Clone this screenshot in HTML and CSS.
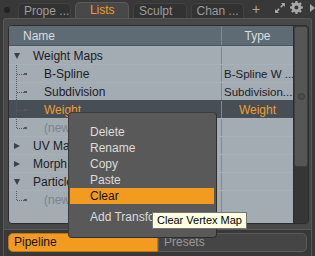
FILE: index.html
```html
<!DOCTYPE html>
<html lang="en">
<head>
  <meta charset="UTF-8">
  <title>Lists</title>
  <link rel="stylesheet" href="styles.css">
</head>
<body>
  <div class="app">
    <div class="tabbar">
      <span class="dot"></span>
      <div class="tab">Prope ...</div>
      <div class="tab active">Lists</div>
      <div class="tab">Sculpt</div>
      <div class="tab">Chan ...</div>
      <span class="plus">+</span>
      <svg class="ico expand" width="12" height="12" viewBox="0 0 12 12">
        <path d="M7 1h4v4l-1.4-1.4-2.2 2.2-1.2-1.2 2.2-2.2z" fill="#a8a8a8"/>
        <path d="M5 11H1V7l1.4 1.4 2.2-2.2 1.2 1.2-2.2 2.2z" fill="#a8a8a8"/>
      </svg>
      <svg class="ico gear" width="13" height="13" viewBox="0 0 13 13">
        <path d="M5.5 0h2l.3 1.8 1.2.5 1.5-1.1 1.4 1.4-1.1 1.5.5 1.2 1.7.2v2l-1.7.3-.5 1.2 1.1 1.5-1.4 1.4-1.5-1.1-1.2.5-.3 1.7h-2l-.3-1.7-1.2-.5-1.5 1.1-1.4-1.4 1.1-1.5-.5-1.2L0 7.5v-2l1.7-.3.5-1.2-1.1-1.5 1.4-1.4 1.5 1.1 1.2-.5z" fill="#a8a8a8"/>
        <circle cx="6.5" cy="6.5" r="2" fill="#383838"/>
      </svg>
      <svg class="ico arrow" width="5" height="8" viewBox="0 0 5 8">
        <path d="M0 0l5 4-5 4z" fill="#a8a8a8"/>
      </svg>
    </div>

    <div class="panel">
      <div class="listwrap">
        <div class="list">
          <div class="row head">
            <div class="c-name">Name</div>
            <div class="c-type">Type</div>
          </div>
          <div class="row">
            <div class="c-name"><span class="tri down"></span><span class="lbl">Weight Maps</span></div>
            <div class="c-type"></div>
          </div>
          <div class="row">
            <div class="c-name"><span class="twig"></span><span class="sq"></span><span class="lbl">B-Spline</span></div>
            <div class="c-type">B-Spline W ...</div>
          </div>
          <div class="row">
            <div class="c-name"><span class="twig"></span><span class="sq"></span><span class="lbl">Subdivision</span></div>
            <div class="c-type">Subdivision...</div>
          </div>
          <div class="row sel">
            <div class="c-name"><span class="twig"></span><span class="sq"></span><span class="lbl">Weight</span></div>
            <div class="c-type center">Weight</div>
          </div>
          <div class="row">
            <div class="c-name"><span class="twig last"></span><span class="sq"></span><span class="lbl new">(new map)</span></div>
            <div class="c-type"></div>
          </div>
          <div class="row">
            <div class="c-name"><span class="tri right"></span><span class="lbl">UV Maps</span></div>
            <div class="c-type"></div>
          </div>
          <div class="row">
            <div class="c-name"><span class="tri right"></span><span class="lbl">Morph Maps</span></div>
            <div class="c-type"></div>
          </div>
          <div class="row">
            <div class="c-name"><span class="tri down"></span><span class="lbl">Particle Maps</span></div>
            <div class="c-type"></div>
          </div>
          <div class="row">
            <div class="c-name"><span class="twig last"></span><span class="sq"></span><span class="lbl new">(new map)</span></div>
            <div class="c-type"></div>
          </div>
          <div class="row fill">
            <div class="c-name"></div>
            <div class="c-type"></div>
          </div>
        </div>
        <div class="scroll">
          <div class="thumb"><span class="knob"></span></div>
        </div>
      </div>
    </div>

    <div class="footer">
      <div class="seg on">Pipeline</div>
      <div class="seg">Presets</div>
    </div>

    <div class="menu">
      <div class="item">Delete</div>
      <div class="item">Rename</div>
      <div class="item">Copy</div>
      <div class="item">Paste</div>
      <div class="item hot">Clear</div>
      <div class="sep"></div>
      <div class="item">Add Transform Map</div>
    </div>
    <div class="tip">Clear Vertex Map</div>
  </div>
</body>
</html>
```

FILE: styles.css
```css
body {
  margin: 0;
  background: #383838;
  font-family: "Liberation Sans", Arial, sans-serif;
  font-size: 11px;
  overflow: hidden;
}
.app {
  position: relative;
  width: 315px;
  height: 256px;
  overflow: hidden;
}

/* tab strip */
.tabbar {
  display: flex;
  align-items: flex-end;
  height: 18px;
}
.dot {
  width: 6px;
  height: 6px;
  border-radius: 50%;
  background: #222;
  margin: 0 8px 5px 4px;
}
.tab {
  width: 54px;
  height: 15px;
  box-sizing: border-box;
  margin-right: 4px;
  padding-left: 5px;
  line-height: 14px;
  font-size: 12px;
  color: #9c9c9c;
  background: #323232;
  border: 1px solid #424242;
  border-bottom: none;
  border-radius: 5px 5px 0 0;
  white-space: nowrap;
}
.tab.active {
  background: #484848;
  border-color: #5a5a5a;
  color: #f29c2a;
  text-align: center;
  padding-left: 0;
  height: 16px;
}
.plus {
  color: #a8a8a8;
  font-size: 14px;
  line-height: 14px;
  margin: 0 0 2px 4px;
}
.ico { margin-bottom: 4px; }
.expand { margin-left: 14px; }
.gear { margin-left: 4px; }
.arrow { margin-left: 7px; margin-bottom: 6px; }

/* main panel */
.panel {
  margin: 0 3px 0 3px;
  height: 211px;
  box-sizing: border-box;
  background: #484848;
  border: 1px solid #575757;
  border-bottom: none;
  border-radius: 3px 3px 0 0;
  padding: 6px 2px 0 4px;
}
.listwrap {
  display: flex;
  height: 197px;
  border: 1px solid #2c2c2c;
  border-radius: 4px;
  overflow: hidden;
  background: #3a3a3a;
}
.list {
  width: 284px;
  display: flex;
  flex-direction: column;
  background: #a3abb3;
}
.row {
  display: flex;
  height: 18px;
  flex-shrink: 0;
  box-sizing: border-box;
  border-top: 1px solid #a8b0b8;
  color: #1c1c26;
  font-size: 12px;
}
.row.head {
  height: 20px;
  background: #5e6b75;
  color: #d8dde2;
  border-top: none;
  border-bottom: 1px solid #4a545c;
}
.row.fill { flex: 1; border-top: none; }
.row.sel { background: #474e56; border-top-color: #474e56; }
.c-name {
  width: 212px;
  display: flex;
  align-items: center;
  padding-left: 5px;
  box-sizing: border-box;
  white-space: nowrap;
}
.head .c-name { padding-left: 14px; }
.c-type {
  flex: 1;
  min-width: 0;
  border-left: 1px solid #7f8990;
  display: flex;
  align-items: center;
  padding-left: 2px;
  white-space: nowrap;
  overflow: hidden;
  font-size: 11.5px;
}
.head .c-type,
.c-type.center { justify-content: center; padding-left: 0; font-size: 12px; }
.sel .lbl, .sel .c-type { color: #f29c2a; }

.tri { width: 0; height: 0; flex-shrink: 0; }
.tri.down {
  border-left: 3px solid transparent;
  border-right: 3px solid transparent;
  border-top: 6px solid #3c3f44;
  margin-right: 13px;
}
.tri.right {
  border-top: 3px solid transparent;
  border-bottom: 3px solid transparent;
  border-left: 6px solid #3c3f44;
  margin-right: 13px;
}
.twig {
  align-self: stretch;
  width: 7px;
  margin-left: 2px;
  border-left: 1px dotted #555a60;
  position: relative;
}
.twig::after {
  content: "";
  position: absolute;
  left: 0;
  top: 9px;
  width: 7px;
  border-top: 1px dotted #555a60;
}
.twig.last {
  align-self: flex-start;
  height: 9px;
}
.sq {
  width: 3px;
  height: 2px;
  background: #555a60;
  margin-right: 17px;
}
.lbl.new { color: #7b838b; }

.scroll {
  width: 14px;
  display: flex;
  flex-direction: column;
  background: #363636;
  border-left: 1px solid #2c2c2c;
}
.thumb {
  height: 139px;
  background: #565656;
  border: 1px solid #3e3e3e;
  border-radius: 3px;
  display: flex;
  align-items: center;
  justify-content: center;
}
.knob {
  width: 5px;
  height: 5px;
  border-radius: 50%;
  background: #4c4c4c;
  border: 1px solid #3a3a3a;
}

/* bottom segmented bar */
.footer {
  display: flex;
  margin: 0 3px;
  height: 27px;
  box-sizing: border-box;
  border: 1px solid #575757;
  border-bottom: none;
  padding: 3px 4px 0 4px;
}
.seg {
  height: 19px;
  box-sizing: border-box;
  line-height: 17px;
  padding-left: 5px;
  font-size: 12px;
  border: 1px solid #5c5c5c;
  background: #454545;
  color: #9a9a9a;
  flex: 1;
  border-radius: 0 5px 5px 0;
}
.seg.on {
  flex: 0 0 150px;
  background: #f39b1e;
  border-color: #b9761a;
  color: #111;
  border-radius: 5px 0 0 5px;
}

/* context menu and tooltip */
.menu {
  position: absolute;
  left: 68px;
  top: 112px;
  width: 149px;
  height: 126px;
  box-sizing: border-box;
  background: #595959;
  border: 1px solid #3c3c3c;
  border-right-color: #2e2e2e;
  border-bottom-color: #2e2e2e;
  border-radius: 4px;
  padding-top: 11px;
  font-size: 12px;
}
.item {
  height: 16px;
  line-height: 16px;
  padding-left: 20px;
  margin: 0 2px 0 1px;
  color: #dcdcdc;
  white-space: nowrap;
  overflow: hidden;
}
.item.hot {
  background: #f39b1e;
  color: #111;
}
.sep { height: 5px; }
.tip {
  position: absolute;
  left: 152px;
  top: 212px;
  height: 17px;
  box-sizing: border-box;
  padding: 0 4px;
  line-height: 15px;
  font-size: 11px;
  background: #ffffe1;
  border: 1px solid #767676;
  color: #000;
  white-space: nowrap;
}
```
